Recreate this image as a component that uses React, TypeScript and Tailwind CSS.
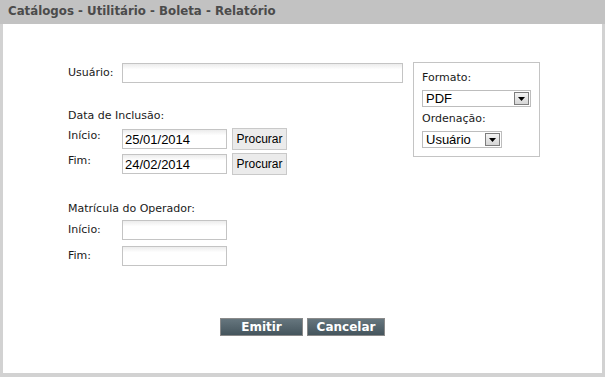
import { useState } from 'react';

const LABEL = "font-['DejaVu_Sans',Verdana,sans-serif] text-[11px] leading-[14px] text-[#1a1a1a]";
const INPUT =
  "h-[20px] border border-[#c4c4c4] bg-gradient-to-b from-[#ececec] to-white to-[30%] px-[2px] font-['Liberation_Sans',Arial,sans-serif] text-[13px] text-black outline-none";

function SmallButton({ children }: { children: React.ReactNode }) {
  return (
    <button className="ml-[5px] h-[22px] w-[55px] border border-[#c9c9c9] bg-[#ebebeb] font-['Liberation_Sans',Arial,sans-serif] text-[12px] text-black">
      {children}
    </button>
  );
}

function FakeSelect({ value, width }: { value: string; width: string }) {
  return (
    <div className={`${width} flex h-[17px] items-center justify-between border border-[#bdbdbd] bg-white pl-[3px] pr-[1px]`}>
      <span className="font-['Liberation_Sans',Arial,sans-serif] text-[13px] leading-none text-black">{value}</span>
      <span className="flex h-[13px] w-[15px] items-center justify-center border border-[#7d7d7d] bg-gradient-to-b from-[#f4f4f4] to-[#d6d6d6]">
        <svg width="7" height="4" viewBox="0 0 7 4">
          <path d="M0 0h7L3.5 4z" fill="#000" />
        </svg>
      </span>
    </div>
  );
}

function DateRow({ label, value }: { label: string; value: string }) {
  return (
    <div className="flex items-start">
      <span className={`${LABEL} w-[54px] pt-[1px]`}>{label}</span>
      <input className={`${INPUT} mt-[1px] w-[105px]`} defaultValue={value} />
      <SmallButton>Procurar</SmallButton>
    </div>
  );
}

function MatRow({ label }: { label: string }) {
  return (
    <div className="flex items-center">
      <span className={`${LABEL} w-[54px]`}>{label}</span>
      <input className={`${INPUT} h-[19px] w-[105px]`} />
    </div>
  );
}

export default function App() {
  const [usuario, setUsuario] = useState('');

  return (
    <div className="flex h-[377px] w-[605px] flex-col bg-[#d2d2d2] pb-[4px] pl-[3px] pr-[3px]">
      {/* Title bar */}
      <div className="-mx-[3px] flex h-[24px] shrink-0 items-center bg-[#c2c2c2] px-[8px]">
        <h1 className="font-['DejaVu_Sans',Verdana,sans-serif] text-[11.8px] font-bold text-[#4b4b4b]">
          Catálogos - Utilitário - Boleta - Relatório
        </h1>
      </div>

      <div className="flex flex-1 flex-col bg-white pt-[38px]">
        <div className="flex items-start pl-[65px]">
          {/* Left column */}
          <div className="flex w-[335px] flex-col">
            <div className="flex items-center pt-[1px]">
              <span className={`${LABEL} w-[54px]`}>Usuário:</span>
              <input
                className={`${INPUT} w-[281px]`}
                value={usuario}
                onChange={(e) => setUsuario(e.target.value)}
              />
            </div>

            <p className={`${LABEL} mt-[26px]`}>Data de Inclusão:</p>
            <div className="mt-[5px] flex flex-col gap-[3px]">
              <DateRow label="Início:" value="25/01/2014" />
              <DateRow label="Fim:" value="24/02/2014" />
            </div>

            <p className={`${LABEL} mt-[27px]`}>Matrícula do Operador:</p>
            <div className="mt-[4px] flex flex-col gap-[6px]">
              <MatRow label="Início:" />
              <MatRow label="Fim:" />
            </div>
          </div>

          {/* Options box */}
          <div className="ml-[10px] flex h-[95px] w-[127px] flex-col border border-[#c4c4c4] px-[8px] pt-[8px]">
            <span className={LABEL}>Formato:</span>
            <div className="mt-[5px]">
              <FakeSelect value="PDF" width="w-[109px]" />
            </div>
            <span className={`${LABEL} mt-[5px]`}>Ordenação:</span>
            <div className="mt-[5px]">
              <FakeSelect value="Usuário" width="w-[80px]" />
            </div>
          </div>
        </div>

        {/* Actions */}
        <div className="mt-[52px] flex justify-center gap-[4px]">
          <button className="h-[18px] w-[83px] border border-[#8a8a8a] bg-gradient-to-b from-[#66767e] to-[#45555d] font-['DejaVu_Sans',Verdana,sans-serif] text-[12px] font-bold leading-none text-white">
            Emitir
          </button>
          <button className="h-[18px] w-[78px] border border-[#8a8a8a] bg-gradient-to-b from-[#66767e] to-[#45555d] font-['DejaVu_Sans',Verdana,sans-serif] text-[12px] font-bold leading-none text-white">
            Cancelar
          </button>
        </div>
      </div>
    </div>
  );
}
